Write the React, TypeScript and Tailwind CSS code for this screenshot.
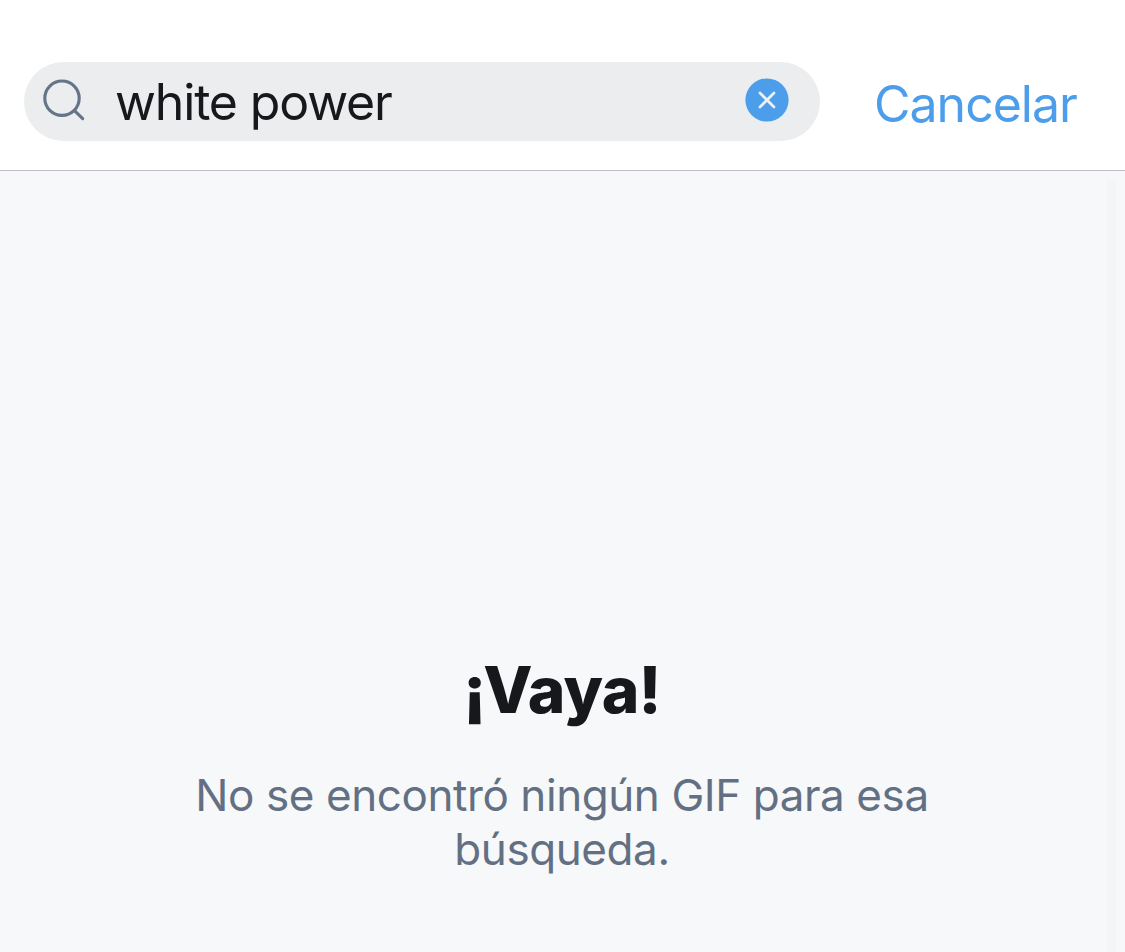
export default function App() {
  return (
    <div className="flex h-[952px] w-[1125px] flex-col overflow-hidden bg-[#f7f8fa] font-['Inter',sans-serif]">
      <header className="flex h-[171px] shrink-0 items-start border-b border-[#bfc0c8] bg-white pt-[62px] pl-6">
        <div className="flex h-[79px] w-[796px] items-center rounded-full bg-[#ebedee] pr-[31px] pl-[18px]">
          <svg className="mb-[2px] size-[44px] shrink-0" viewBox="0 0 44 44" fill="none" stroke="#667489" strokeWidth="3.1" strokeLinecap="round">
            <circle cx="20" cy="19.2" r="17.2" />
            <path d="M32.5 31.7L40.7 39.7" />
          </svg>
          <span className="ml-[29px] flex-1 text-[50px] leading-[60px] font-[430] tracking-[-1.15px] whitespace-nowrap text-[#16181c]">white power</span>
          <svg className="mb-[3px] size-[44px] shrink-0" viewBox="0 0 44 44" fill="none">
            <circle cx="22" cy="22" r="21.6" fill="#4c9eeb" />
            <path d="M15 15L29 29M29 15L15 29" stroke="#eff2f5" strokeWidth="2.7" strokeLinecap="round" />
          </svg>
        </div>
        <button className="mt-[12px] ml-[54px] text-[50px] leading-[60px] tracking-[-1px] text-[#4c9eeb]">Cancelar</button>
      </header>
      <main className="flex flex-1 justify-end">
        <section className="flex w-[1107px] flex-col items-center pt-[479px] pl-[17px] text-center">
          <h1 className="text-[64px] leading-[80px] font-[850] tracking-[-0.7px] text-[#16181c]">¡Vaya!</h1>
          <p className="mt-[38px] w-[800px] text-[44px] leading-[54px] tracking-[-0.42px] text-[#637083]">No se encontró ningún GIF para esa<br />búsqueda.</p>
        </section>
        <div className="mt-[8px] mr-[9px] w-[9px] bg-[#f4f5f7]" />
      </main>
    </div>
  );
}
